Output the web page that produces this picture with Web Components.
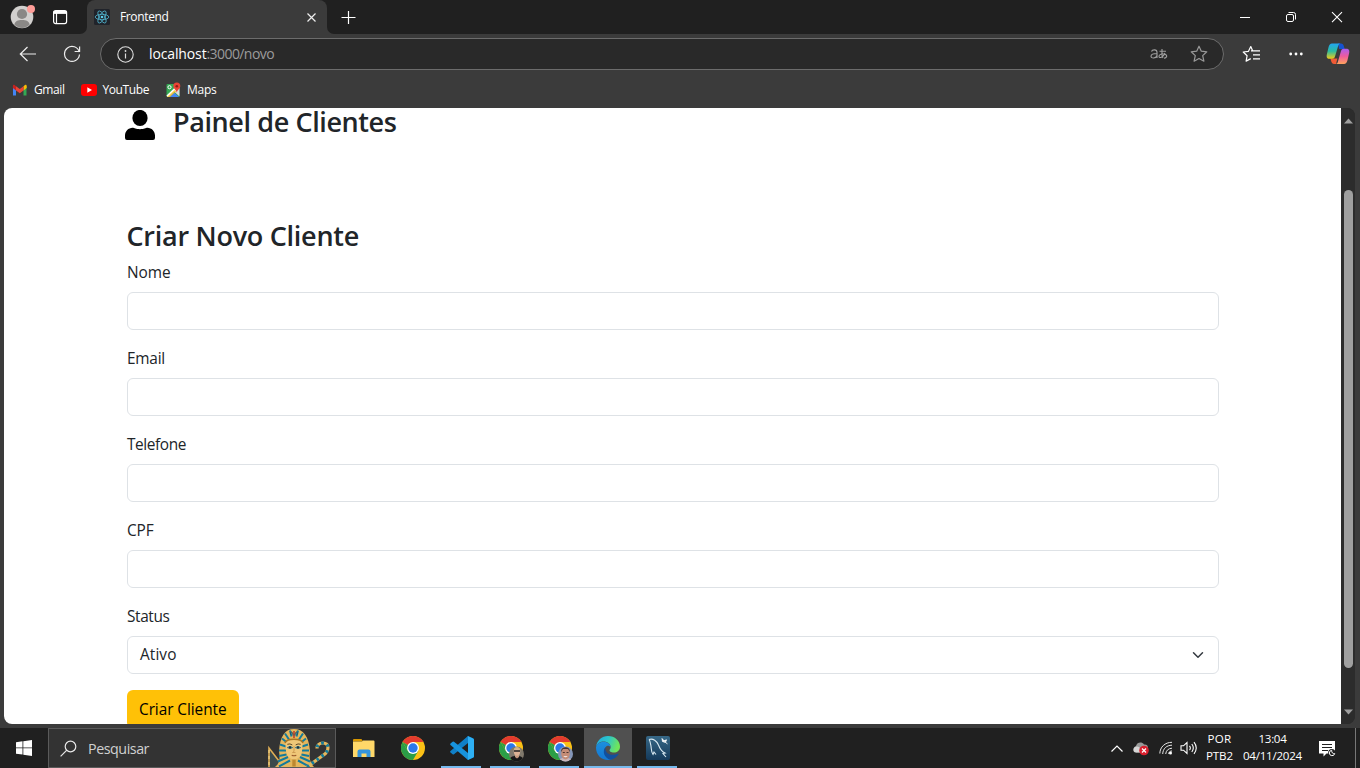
<!DOCTYPE html>
<html lang="pt-BR">
<head>
<meta charset="utf-8">
<title>Frontend</title>
<style>
html,body{margin:0;height:100%;overflow:hidden;background:#3b3b3b}
body{font-family:"Open Sans","Noto Sans",sans-serif}
</style>
</head>
<body>
<desktop-screen>
  <browser-window>
    <tab-strip slot="tabs"></tab-strip>
    <nav-bar slot="nav"></nav-bar>
    <bookmark-bar slot="marks"></bookmark-bar>
    <client-page slot="page"></client-page>
    <scroll-rail slot="rail"></scroll-rail>
  </browser-window>
  <task-bar></task-bar>
</desktop-screen>
<script>
function define(name, css, html) {
  const tpl = document.createElement('template');
  tpl.innerHTML = '<style>*,:host{box-sizing:border-box}svg{display:block;flex:none}' + css + '</style>' + html;
  customElements.define(name, class extends HTMLElement {
    constructor() {
      super();
      this.attachShadow({ mode: 'open' }).appendChild(tpl.content.cloneNode(true));
    }
  });
}

define('desktop-screen', `:host{display:flex;flex-direction:column;width:1360px;height:768px;overflow:hidden}`, `<slot></slot>`);

define('browser-window', `
:host{display:flex;flex-direction:column;height:728px;background:#3b3b3b}
.view{display:flex;margin:0 5px 4px 4px;height:616px;border-radius:8px;overflow:hidden;background:#2c2c2c}
`, `<slot name="tabs"></slot><slot name="nav"></slot><slot name="marks"></slot>
<div class="view"><slot name="page"></slot><slot name="rail"></slot></div>`);

define('tab-strip', `
:host{display:flex;height:34px;background:#202020;color:#fff;font-size:12px;line-height:16px}
.left{width:87px;display:flex;background:#3b3b3b}
.left>div{width:87px;height:34px;background:#202020;border-bottom-right-radius:7px;display:flex;padding:4px 0 0 10px}
.left svg+svg{margin:5px 0 0 16px}
.tab{width:240px;background:#3b3b3b;border-radius:8px 8px 0 0;display:flex;align-items:center;padding:0 10px 0 7px}
.tabwrap{background:#202020;display:flex}
.tab fit-text{margin-left:10px;flex:1}
.right{flex:1;background:#3b3b3b;display:flex}
.right>div{flex:1;background:#202020;border-bottom-left-radius:7px;display:flex;padding-left:14px;align-items:center}
.win{margin-left:auto;display:flex}
`, `<div class="left"><div>
<svg width="26" height="26" viewBox="0 0 26 26"><circle cx="12" cy="13" r="11.3" fill="#d2d0ce"/><circle cx="12" cy="10" r="5.1" fill="#8a8886"/><path d="M4.3 20.6c.7-3.400 3.300-4.600 7.700-4.600s7 1.200 7.700 4.600A11 11 0 0 1 12 24a11 11 0 0 1-7.700-3.400z" fill="#8a8886"/><circle cx="21" cy="5" r="4" fill="#ff9d98"/></svg>
<svg width="16" height="16" viewBox="0 0 16 16" fill="none" stroke="#fff"><rect x="1.600" y="1.600" width="13" height="13" rx="2" stroke-width="1.200"/><path d="M1.600 3.400h13" stroke-width="3"/><path d="M4.500 4v10.500" stroke-width="1.200"/></svg>
</div></div>
<div class="tabwrap"><div class="tab">
<svg width="16" height="16" viewBox="0 0 16 16"><rect width="16" height="16" rx="1.500" fill="#20232a"/><g fill="none" stroke="#5ad0ee" stroke-width=".8" opacity=".85"><ellipse cx="8" cy="8" rx="6.800" ry="2.700"/><ellipse cx="8" cy="8" rx="6.800" ry="2.700" transform="rotate(60 8 8)"/><ellipse cx="8" cy="8" rx="6.800" ry="2.700" transform="rotate(120 8 8)"/></g><circle cx="8" cy="8" r="1.300" fill="#5ad0ee"/></svg>
<fit-text w="48.500">Frontend</fit-text>
<svg width="11" height="11" viewBox="0 0 11 11"><path d="M1.500 1.500l8 8M9.500 1.500l-8 8" stroke="#eee" stroke-width="1.200"/></svg>
</div></div>
<div class="right"><div>
<svg width="15" height="15" viewBox="0 0 15 15"><path d="M7.500 1v13M.5 7.500h14" stroke="#fff" stroke-width="1.200"/></svg>
<div class="win">
<svg width="46" height="34" viewBox="0 0 46 34"><path d="M18 17.500h10" stroke="#fff"/></svg>
<svg width="46" height="34" viewBox="0 0 46 34" fill="none" stroke="#fff"><rect x="18.500" y="14.500" width="7" height="7" rx="1.500"/><path d="M20.500 12.500h5a2 2 0 0 1 2 2v5"/></svg>
<svg width="46" height="34" viewBox="0 0 46 34"><path d="M18 12.200l10 10M28 12.200l-10 10" stroke="#fff" stroke-width="1.100"/></svg>
</div></div></div>`);

define('nav-bar', `
:host{display:flex;height:38px;padding-top:4px;align-items:flex-start;font-size:14px}
.box{display:flex;align-items:center;width:1124px;height:32px;border:1px solid #6c6c6c;border-radius:16px;background:#292929;padding:0 15px 0 16px;margin-left:19px}
.url{flex:1;display:flex;margin-left:15px;line-height:20px;color:#9b9b9b}
.url b{font-weight:400;color:#fff}
.a{margin:7px 0 0 19px}.r{margin:7px 0 0 26px}
`, `<svg class="a" width="18" height="18" viewBox="0 0 18 18" fill="none" stroke="#eee" stroke-width="1.200"><path d="M17 9H1.500M8.500 2L1.300 9l7.200 7"/></svg>
<svg class="r" width="18" height="18" viewBox="0 0 18 18" fill="none" stroke="#eee" stroke-width="1.200"><path d="M16.300 7A7.500 7.500 0 1 0 16.500 9.500M16.600 1.500v5h-5"/></svg>
<div class="box">
<svg width="17" height="17" viewBox="0 0 17 17"><circle cx="8.500" cy="8.500" r="7.700" fill="none" stroke="#ddd" stroke-width="1.100"/><path d="M8.500 7.500v5" stroke="#ddd" stroke-width="1.200"/><circle cx="8.500" cy="5" r=".9" fill="#ddd"/></svg>
<div class="url"><b><fit-text w="57.500">localhost</fit-text></b><fit-text w="67.500">:3000/novo</fit-text></div>
<svg width="18" height="16" viewBox="0 0 18 16" fill="none" stroke="#a0a0a0" stroke-width="1.100"><path d="M1.500 5.500C2.300 3.300 7 3 7 6.300V12M7 7.500C3 7.500 1 8.500 1 10.200c0 2.600 5 2.400 6-.7M9.500 5.300h6.500M12 3v5.500c0 2 .4 2.500 1 3.500M15 7c-1.500 4-6 6-6 3.400 0-2.600 7.500-3.500 7.700-.3 0 1.400-1.200 2-2.700 2.200"/></svg>
<svg style="margin-left:22px" width="18" height="18" viewBox="0 0 18 18" fill="none" stroke="#999" stroke-width="1.200" stroke-linejoin="round"><path d="M9 1.200l2.300 5 5.500.6-4.100 3.800 1.200 5.600L9 13.500l-4.900 2.700 1.200-5.600L1.200 6.800l5.500-.6z"/></svg>
</div>
<svg style="margin:7px 0 0 18px" width="19" height="18" viewBox="0 0 19 18" fill="none" stroke="#fff" stroke-width="1.200" stroke-linejoin="round"><path d="M10.500 5.400L8.800 1.500 6.500 6.300l-5.300.7 3.900 3.700-1 5.400 4.700-2.500M9 5.800h9M11 9.800h7M11 13.800h7"/></svg>
<svg style="margin:14px 0 0 28px" width="14" height="4" viewBox="0 0 14 4" fill="#fff"><circle cx="1.700" cy="2" r="1.400"/><circle cx="7" cy="2" r="1.400"/><circle cx="12.300" cy="2" r="1.400"/></svg>
<svg style="margin:5px 0 0 23px" width="24" height="22" viewBox="0 0 24 22"><defs><linearGradient id="a" x1="0" y1="0" x2="0" y2="1"><stop stop-color="#22a5f1"/><stop offset=".5" stop-color="#2bbba0"/><stop offset="1" stop-color="#f2cb18"/></linearGradient><linearGradient id="b" x1="0" y1="0" x2="0" y2="1"><stop stop-color="#a95df0"/><stop offset=".5" stop-color="#ee5b9c"/><stop offset="1" stop-color="#ffa35c"/></linearGradient></defs><path d="M12 .5h3c1.700 0 2.300 1 2.800 2.600l.9 2.900h-5.500z" fill="#1652d0"/><path d="M10 21H8c-1.500 0-2.200-1-2.700-2.400l-.9-3h7z" fill="#f05a35"/><path d="M6 .5h8.500c-1.200 0-1.900 1-2.300 2.300L9 13.600c-.5 1.400-1.300 2.200-2.800 2.200H3.500C.8 15.800.2 13.600 1 10.700L2.600 4C3.300 1.800 4.100.5 6 .5z" fill="url(#a)"/><path d="M18 21H9.600c1.200 0 1.900-1 2.300-2.300L15 7.900c.5-1.400 1.300-2.200 2.800-2.200h2.700c2.700 0 3.300 2.200 2.500 5.100l-1.600 6.700C20.700 19.700 19.900 21 18 21z" fill="url(#b)"/></svg>`);

define('bookmark-bar', `
:host{display:flex;height:36px;align-items:center;color:#fff;font-size:12px;line-height:16px;padding-left:12px}
fit-text{margin-left:7px}
`, `<svg width="15" height="12" viewBox="0 0 15 12"><path d="M1 2v9.500h3V5z" fill="#4285f4"/><path d="M14.500 2v9.500h-3V5z" fill="#34a853"/><path d="M11.500 2.300L13 1c1-.6 1.700 0 1.700 1.200V4l-3.200 2.500z" fill="#fbbc04"/><path d="M4 6.500V2.200L7.800 5l3.700-2.800v4.300L7.800 9.300z" fill="#ea4335"/><path d="M.9 4V2.200C.9.900 2 .5 2.800 1.200L4 2.200v4.300z" fill="#c5221f"/></svg>
<fit-text w="30.500">Gmail</fit-text>
<svg style="margin-left:16.500px" width="16" height="12" viewBox="0 0 16 12"><rect width="16" height="12" rx="3" fill="#f00"/><path d="M6.300 3.300v5.400L11 6z" fill="#fff"/></svg>
<fit-text style="margin-left:5.500px" w="46.500">YouTube</fit-text>
<svg style="margin-left:17px" width="15" height="16" viewBox="0 0 15 16"><rect x=".5" y="2" width="13" height="13" rx="1" fill="#34a853"/><path d="M13.500 6v8.500L7.500 9z" fill="#dadce0"/><path d="M2 15l5.300-5.300L13 15z" fill="#4285f4"/><path d="M.5 13.500L12 2.500l1.500 2L3 15H1.500z" fill="#fff"/><path d="M1 15L8.500 8l1.700 1.600L4 15z" fill="#fbbc04" opacity=".7"/><path d="M10.800 11c0-2.700-3.500-3.900-3.500-6.900a3.500 3.500 0 0 1 7 0c0 3-3.500 4.200-3.500 6.900z" fill="#ea4335"/><circle cx="10.800" cy="4.200" r="1.300" fill="#8e1d16"/><circle cx="3.500" cy="5.200" r="1.600" fill="none" stroke="#fff"/></svg>
<fit-text style="margin-left:6px" w="29.500">Maps</fit-text>`);

define('form-field', `
:host{display:block;margin-bottom:16px}
label{display:block;line-height:24px;height:24px;padding-top:1px;margin-bottom:8px}
`, `<label><slot name="label"></slot></label><slot></slot>`);

define('text-box', `
:host{display:block}
input{display:block;width:100%;height:38px;border:1px solid #dee2e6;border-radius:6px;background:#fff;padding:6px 12px;outline:none}
`, `<input type="text">`);

define('select-box', `
:host{display:flex;align-items:center;justify-content:space-between;height:38px;border:1px solid #dee2e6;border-radius:6px;padding:1px 12px 0;line-height:24px}
svg{margin-top:-1px}
`, `<slot></slot><svg width="16" height="12" viewBox="0 0 16 16"><path fill="none" stroke="#343a40" stroke-linecap="round" stroke-linejoin="round" stroke-width="2" d="m2 5 6 6 6-6"/></svg>`);

define('action-button', `
:host{display:block;width:112px}
button{display:block;width:112px;height:38px;border:0;border-radius:6px;background:#ffc107;color:#000;font:inherit;line-height:24px;padding:2px 12px 0;text-align:left}
`, `<button><slot></slot></button>`);

define('client-page', `
:host{display:block;flex:none;width:1337px;height:616px;background:#fff;overflow:hidden;color:#212529;font-size:15.400px;padding:0 122px 0 123px}
header{display:flex;height:110.400px;margin-left:-2px}
header svg{margin-top:2px}
h2{font-size:27px;line-height:33.600px;font-weight:600;margin:0 0 8px}
header h2{line-height:28px;margin:0 0 0 18px}
.title{padding-top:1px;height:33.600px;margin-left:-.5px}
`, `<header><svg width="30" height="30" viewBox="0 0 30 30"><ellipse cx="15" cy="8" rx="7.600" ry="8.100"/><path d="M7.500 17.800c2 0 3.300 1.400 7.500 1.400s5.500-1.400 7.500-1.400c4 0 7.500 3.600 7.500 7.800V28a2 2 0 0 1-2 2H2a2 2 0 0 1-2-2v-2.400c0-4.200 3.500-7.800 7.500-7.800z"/></svg>
<h2><fit-text w="223.500">Painel de Clientes</fit-text></h2></header>
<h2 class="title"><fit-text w="232.500">Criar Novo Cliente</fit-text></h2>
<form-field><fit-text slot="label" w="43.500">Nome</fit-text><text-box></text-box></form-field>
<form-field><fit-text slot="label" w="38">Email</fit-text><text-box></text-box></form-field>
<form-field><fit-text slot="label" w="59">Telefone</fit-text><text-box></text-box></form-field>
<form-field><fit-text slot="label" w="26.500">CPF</fit-text><text-box></text-box></form-field>
<form-field><fit-text slot="label" w="42.500">Status</fit-text><select-box><fit-text w="36.500">Ativo</fit-text></select-box></form-field>
<action-button><fit-text w="87.500">Criar Cliente</fit-text></action-button>`);

define('scroll-rail', `
:host{display:flex;flex-direction:column;align-items:center;width:14px;height:616px;background:#2c2c2c;padding:10px 0 9px}
.thumb{width:9px;height:478px;border-radius:4.500px;background:#9f9f9f;margin:66px 0 41px}
`, `<svg width="9" height="6" viewBox="0 0 9 6"><path d="M0 5.500L4.500.5 9 5.500z" fill="#a0a0a0"/></svg><div class="thumb"></div><svg width="9" height="6" viewBox="0 0 9 6"><path d="M0 .5L4.500 5.500 9 .5z" fill="#a0a0a0"/></svg>`);

define('chrome-logo', `:host{display:block;width:24px;height:24px}`, `<svg width="24" height="24" viewBox="0 0 24 24"><circle cx="12" cy="12" r="12" fill="#fbc116"/><path d="M12 12L1.600 6A12 12 0 0 1 22.400 6H12z" fill="#e33b2e"/><path d="M1.600 6A12 12 0 0 0 12 24l5.200-9-5.200-3-5.200 3z" fill="#2b9e47"/><path d="M1.600 6L6.800 15 12 12z" fill="#2b9e47"/><circle cx="12" cy="12" r="6" fill="#fff"/><circle cx="12" cy="12" r="4.700" fill="#2b78ea"/></svg>`);

define('task-app', `
:host{display:flex;position:relative;width:49px;height:40px;justify-content:center;align-items:center}
:host([open])::after{content:"";position:absolute;left:4px;right:5px;bottom:0;height:2px;background:#76b9ed}
:host([active]){background:#505050;width:48px}
:host([active])::after{left:0;right:0}
::slotted(svg){display:block}
::slotted(.badge){position:absolute;left:23px;top:18px}
`, `<slot></slot>`);

define('task-bar', `
:host{display:flex;height:40px;background:#202020;color:#fff}
.start{width:48px;display:flex;align-items:center;justify-content:center}
.search{width:288px;height:40px;background:#333;border:1px solid #5a5a5a;display:flex;align-items:center;padding-left:11px;color:#d0d0d0;font-size:14.300px;line-height:20px}
.search fit-text{margin-left:11px;flex:1;padding-top:1px}
.apps{display:flex;padding-left:3px}
.tray{margin-left:auto;display:flex;align-items:center;width:251px;font-size:11.600px;line-height:17.500px}
.col{display:flex;flex-direction:column;align-items:center;padding-bottom:2px}
.end{margin-left:auto;width:5px;height:40px;border-left:1px solid #777}
`, `<div class="start"><svg width="16" height="16" viewBox="0 0 16 16" fill="#fff"><path d="M0 2.200l6.500-.9v6.200H0zM7.300 1.200L16 0v7.500H7.300zM0 8.300h6.500v6.300L0 13.700zM7.300 8.300H16V16l-8.700-1.200z"/></svg></div>
<div class="search"><svg width="17" height="17" viewBox="0 0 17 17" fill="none" stroke="#e8e8e8" stroke-width="1.200"><circle cx="10.500" cy="6.500" r="5.300"/><path d="M6.800 10.200L.6 16.400"/></svg>
<fit-text w="61">Pesquisar</fit-text>
<svg style="margin-right:4px" width="64" height="38" viewBox="0 0 64 38"><path d="M2 38V19l9 11 4 8z" fill="#3b4a4c"/><path d="M2 38V19l10 13" stroke="#dfae55" stroke-width="1.600" fill="none"/><path d="M2 21v17" stroke="#fbdc8d" stroke-dasharray="3 3"/>
<path d="M8 38c5-4 5-9 4-16C13 7 18 0 27 0s15 7 16 22c-1 7 0 12 4 16z" fill="#e4b65d"/>
<g fill="none" stroke="#137b9c" stroke-width="2"><path d="M23 1.500l1.500 6M31 1.500l-1.500 6M18 4.500l4 6M36 4.500l-4 6M15 9.500l5 4M39 9.500l-5 4M13 15.500l6 2M41 15.500l-6 2M12 21.500l7 0M42 21.500l-7 0M12 27l7.500-1.500M42 27l-7.500-1.500M11 32.500l10-4.500M43 32.500l-10-4.500M12 37.500l11-6M42 37.500l-11-6"/></g>
<path d="M18.500 15c0-6 17-6 17 0 0 8-1 14-8.500 16-7.500-2-8.500-8-8.500-16z" fill="#efc778"/>
<path d="M18 14c2-5 16-5 18 0" fill="none" stroke="#a97523" stroke-width="1.500"/>
<path d="M20.300 15.300q2.700-1 5 .6M28.700 15.900q2.300-1.600 5-.6" stroke="#4d3a20" stroke-width=".9" fill="none"/><path d="M20.500 18.600q2.500-2.500 5 0-2.500 1.700-5 0zM28.500 18.600q2.500-2.500 5 0-2.500 1.700-5 0z" fill="#e9efe9" stroke="#1a5c70"/><circle cx="23" cy="18.500" r="1" fill="#222"/><circle cx="31" cy="18.500" r="1" fill="#222"/><path d="M27 17v5.500l-1.500 1h3" fill="none" stroke="#c7934a" stroke-width=".8"/><path d="M24.700 26.300q2.300 1 4.600 0" stroke="#9a5c2c" stroke-width="1.100" fill="none"/><path d="M25.300 30.500h3.400v7h-3.400z" fill="#bd8830"/>
<path d="M27 2v7" stroke="#c63e27" stroke-width="1.600"/><path d="M23.500 5.500c0-4 2.500-3 2.500 1M30.500 5.500c0-4-2.500-3-2.500 1" fill="none" stroke="#354b55"/>
<path d="M40 38L56.500 26c6-4 6-12-.5-12-4 0-6 2.500-6 5.500" fill="none" stroke="#e4b65d" stroke-width="3.200"/><path d="M40 38L56.500 26c6-4 6-12-.5-12-4 0-6 2.500-6 5.500" fill="none" stroke="#137b9c" stroke-width="3.200" stroke-dasharray="2.500 3.500"/></svg></div>
<div class="apps">
<task-app><svg width="22" height="18" viewBox="0 0 22 18"><path d="M0 1Q0 0 1 0h7.500l1.500 2.500H0z" fill="#d89700"/><path d="M0 2.500h9l1-1h10.500q1 0 1 1V18H0z" fill="#ffd869"/><path d="M4.500 18v-5.500q0-2 2-2h9q2 0 2 2V18h-4v-3.500h-5V18z" fill="#3594dc"/></svg></task-app>
<task-app><chrome-logo></chrome-logo></task-app>
<task-app open><svg width="24" height="24" viewBox="0 0 24 24"><path d="M18 0l5 2.300q1 .4 1 1.500L18 7 4 18.300q-.7.500-1.400 0L.5 16.500q-.7-.8 0-1.500z" fill="#1080c8"/><path d="M18 24l5-2.300q1-.4 1-1.500L18 17 4 5.700q-.7-.5-1.400 0L.5 7.500q-.7.800 0 1.500z" fill="#1793dd"/><path d="M17.500 0L23 2.500q1 .5 1 1.500v16q0 1-1 1.500L17.500 24q.5-.5.500-1.500v-21q0-1-.5-1.500z" fill="#2eb0f4"/></svg></task-app>
<task-app open><chrome-logo></chrome-logo><svg class="badge" width="15" height="16" viewBox="0 0 15 16"><defs><clipPath id="c"><circle cx="7.500" cy="8" r="7.500"/></clipPath></defs><g clip-path="url(#c)"><path d="M0 0h15v16H0z" fill="#80796c"/><path d="M0 16c0-5 3-6 7.500-6s7.500 1 7.500 6z" fill="#171717"/><path d="M6 7h4v4l-2 1.500L6 11z" fill="#c79a7e"/><ellipse cx="8" cy="5.500" rx="3.200" ry="4.200" fill="#dcb395"/><path d="M4.500 4.500C5 0 11 0 11.500 4.500L8 2.500z" fill="#d5b87d"/><path d="M5 5h6" stroke="#222" stroke-width="1.300"/></g></svg></task-app>
<task-app open><chrome-logo></chrome-logo><svg class="badge" width="15" height="16" viewBox="0 0 15 16"><defs><clipPath id="d"><circle cx="7.500" cy="8" r="7.500"/></clipPath></defs><g clip-path="url(#d)"><path d="M0 0h15v16H0z" fill="#8496b8"/><path d="M1 16c0-4 3-4 6.500-4s6.500 0 6.500 4z" fill="#c9b5bb"/><ellipse cx="7.500" cy="7.500" rx="4.300" ry="6" fill="#c58c76"/><path d="M3 6C2.500-.5 12.500-.5 12 6L10 3H5z" fill="#4a3430"/><path d="M5.200 10.300q2.300 2 4.600 0z" fill="#fff"/><path d="M4.800 6.500h2M8.500 6.500h2" stroke="#4a3430"/></g></svg></task-app>
<task-app open active><svg width="24" height="24" viewBox="0 0 24 24"><defs><linearGradient id="e" x1="0" x2="1" y2=".3"><stop stop-color="#20a8e0"/><stop offset=".5" stop-color="#2ac5cd"/><stop offset="1" stop-color="#6fe55b"/></linearGradient><linearGradient id="f" x1="0" x2="0" y1="0" y2="1"><stop stop-color="#1c8fde"/><stop offset="1" stop-color="#1477d2"/></linearGradient></defs><path d="M0 11C.8 4.500 5.800 0 12 0c7 0 12 5 12 10.500 0 4-3 6-6 6-3.500 0-4.500-1.400-4.500-2.200 0-.8 1.200-1.300 1.200-3.300C14.700 8 11.500 5.500 7.500 5.500 3.500 5.500.8 8 0 11z" fill="url(#e)"/><path d="M0 11.500C.6 8 4 5.800 7.500 5.800c4 0 7 2.500 7 5.200-1-1.200-2.300-1.500-3-1.200C8.500 11 8 14 9 17c1 3 3.500 6 7 6-1.200.6-2.500 1-4 1C5 24 0 18.500 0 11.500z" fill="url(#f)"/><path d="M9.500 11.200C6 15 8 22 14.500 23.700 18 23 21 20.800 22.500 18.200c.3-.6-.2-.8-.7-.5-5.500 2.800-13.500.3-12.300-6.500z" fill="#12509d"/></svg></task-app>
<task-app open style="margin-left:1px"><svg width="24" height="24" viewBox="0 0 24 24"><defs><linearGradient id="g" x1="0" x2="0" y1="0" y2="1"><stop stop-color="#376887"/><stop offset="1" stop-color="#153a5b"/></linearGradient></defs><rect width="24" height="24" rx="2" fill="url(#g)"/><path d="M3 3.500c4-1.500 8 1.500 9.500 5.500 1.500 3.500 2 6 6.500 8l-2 .5 3 3.500M3 3.500c1.500 2 1 3 1.800 5.500C5.500 12 5 16 7 18.500l1-2.500 2 2.500" fill="none" stroke="#d9e9f2" stroke-width="1.100"/><path d="M16 2.500l2 2.300 2.500-1-1 2.600 2 1.500M16 2.500l.5 3 3 1" fill="#fff" stroke="#fff" stroke-width=".8"/></svg></task-app>
</div>
<div class="tray">
<svg style="margin-left:2px" width="12" height="7" viewBox="0 0 12 7"><path d="M.5 6.500L6 1l5.500 5.500" fill="none" stroke="#fff" stroke-width="1.200"/></svg>
<svg style="margin-left:9px" width="18" height="16" viewBox="0 0 18 16"><path d="M4 12.500a4 3.500 0 0 1 0-6.500C5 2 10 1.500 12 4.500c3-.3 4 1.500 4 3.500v4.500z" fill="#999"/><path d="M1.500 9c.5-2.500 4-3.500 6-1.500l5 5H4C2 12.500 1 11 1.500 9z" fill="#d5d5d5"/><circle cx="12" cy="10.500" r="4.800" fill="#d9202e"/><path d="M10 8.500l4 4M14 8.500l-4 4" stroke="#fff" stroke-width="1.200"/></svg>
<svg style="margin-left:9px" width="14" height="14" viewBox="0 0 14 14" fill="none" stroke="#e6e6e6"><path d="M.8 12.500C1 6 6 1.300 13 1.300M3.700 13C4 7.500 7.500 4.300 13 4.200M6.700 13C7 9.500 9.500 7.300 13 7.200M9.700 13c.1-2 1.300-3 3.300-3"/><circle cx="11.500" cy="12" r="1.500" fill="#fff" stroke="none"/></svg>
<svg style="margin-left:7px" width="18" height="14" viewBox="0 0 18 14" fill="none" stroke="#fff" stroke-width="1.100"><path d="M1 4.800h2.500L7 1.500v11L3.500 9.200H1zM9.500 4.800q1.700 2.200 0 4.400M11.800 3q3 4 0 8M14 1.200q4.500 5.800 0 11.600"/></svg>
<div class="col" style="margin-left:8px"><fit-text w="24">POR</fit-text><fit-text w="27">PTB2</fit-text></div>
<div class="col" style="margin-left:10px"><fit-text w="28">13:04</fit-text><fit-text w="59">04/11/2024</fit-text></div>
<svg style="margin-left:17px" width="17" height="17" viewBox="0 0 17 17"><path d="M0 1h16v12.500H7.500L4.500 16.500v-3H0z" fill="#fff"/><path d="M3 4.500h10M3 7.500h10M3 10.500h6" stroke="#202020"/><circle cx="12.800" cy="12.500" r="3.600" fill="#202020"/><path d="M12.700 10.300a2.700 2.700 0 1 0 3 3.300c-2 .3-3.200-1-3-3.300z" fill="none" stroke="#fff"/></svg>
<div class="end"></div>
</div>`);

/* Text run spaced so that its advance equals the width in "w". */
customElements.define('fit-text', class extends HTMLElement {
  constructor() {
    super();
    this.attachShadow({ mode: 'open' }).innerHTML = '<style>:host{display:block;white-space:nowrap}span{display:inline-block;vertical-align:top}</style><span><slot></slot></span>';
  }
  connectedCallback() {
    const span = this.shadowRoot.querySelector('span');
    const target = parseFloat(this.getAttribute('w'));
    const width = span.getBoundingClientRect().width;
    if (target && width) span.style.letterSpacing = (target - width) / this.textContent.length + 'px';
  }
});
</script>
</body>
</html>
